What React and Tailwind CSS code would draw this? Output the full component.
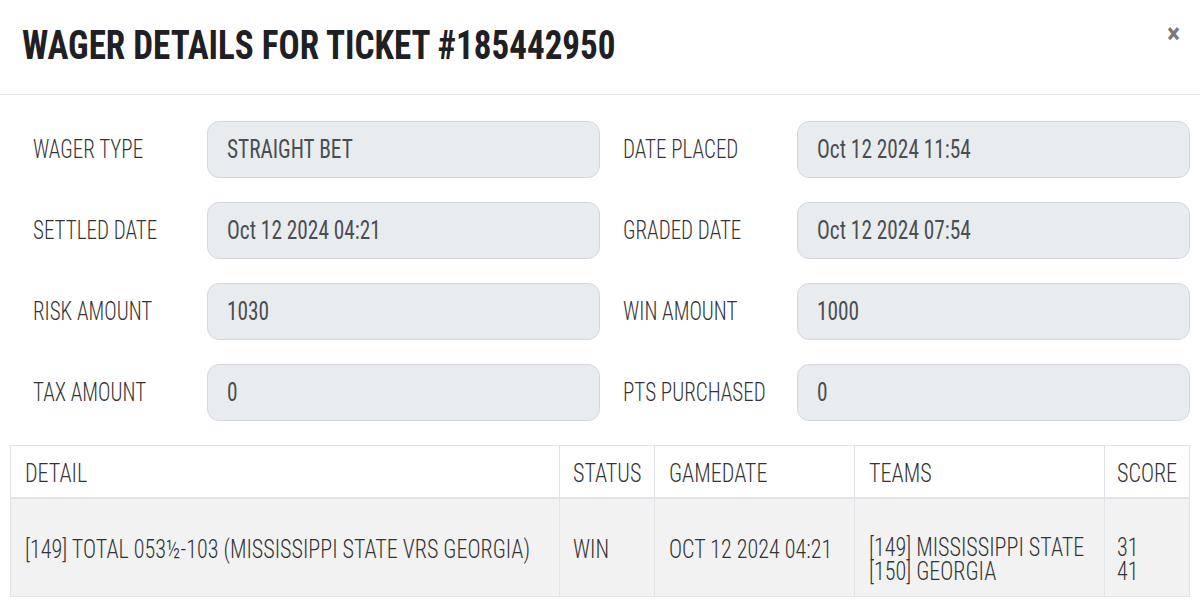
import React from "react";

const FONT = { fontFamily: "'Roboto Condensed','Liberation Sans Narrow','DejaVu Sans Condensed',sans-serif" };

function N({ children, className = "" }) {
  return <span className={"inline-block origin-left whitespace-nowrap " + className}>{children}</span>;
}

function Field({ label, value }) {
  return (
    <div className="flex items-center">
      <div className="w-[174px] shrink-0 text-[26px] font-light text-[#333]">
        <N className="scale-x-[0.81]">{label}</N>
      </div>
      <div className="flex-1 h-[57px] rounded-[12px] bg-[#e9ecef] border border-[#d3d7dc] flex items-center px-[19px] text-[26px] text-[#4a4d52]">
        <N className="scale-x-[0.82]">{value}</N>
      </div>
    </div>
  );
}

function Th({ children, pl }) {
  return (
    <th className={"border border-[#dfe2e6] border-b-2 text-left font-light align-middle " + pl}>
      <N className="scale-x-[0.85] pt-[4px]">{children}</N>
    </th>
  );
}

export default function App() {
  return (
    <div className="w-[1200px] h-[616px] bg-white overflow-hidden" style={FONT}>
      <div className="h-[95px] border-b border-[#e3e3e8] flex items-center justify-between pl-[22px] pr-[20px]">
        <h1 className="text-[41px] font-bold text-[#1e2024] leading-none pb-[4px]">
          <N className="scale-x-[0.855]">WAGER DETAILS FOR TICKET #185442950</N>
        </h1>
        <div className="text-[28px] font-bold text-[#7a7a7a] leading-none -mt-[26px]">×</div>
      </div>

      <div className="pt-[26px] pl-[33px] pr-[10px] grid grid-cols-2 gap-x-[23px] gap-y-[24px]">
        <Field label="WAGER TYPE" value="STRAIGHT BET" />
        <Field label="DATE PLACED" value="Oct 12 2024 11:54" />
        <Field label="SETTLED DATE" value="Oct 12 2024 04:21" />
        <Field label="GRADED DATE" value="Oct 12 2024 07:54" />
        <Field label="RISK AMOUNT" value="1030" />
        <Field label="WIN AMOUNT" value="1000" />
        <Field label="TAX AMOUNT" value="0" />
        <Field label="PTS PURCHASED" value="0" />
      </div>

      <div className="mt-[24px] mx-[10px]">
        <table className="w-full border-collapse text-[26px] font-light text-[#333] table-fixed">
          <colgroup>
            <col className="w-[549px]" />
            <col className="w-[95px]" />
            <col className="w-[200px]" />
            <col className="w-[250px]" />
            <col />
          </colgroup>
          <thead>
            <tr className="h-[52px] bg-white">
              <Th pl="pl-[14px]">DETAIL</Th>
              <Th pl="pl-[13px]">STATUS</Th>
              <Th pl="pl-[14px]">GAMEDATE</Th>
              <Th pl="pl-[14px]">TEAMS</Th>
              <Th pl="pl-[12px]">SCORE</Th>
            </tr>
          </thead>
          <tbody>
            <tr className="h-[99px] bg-[#f2f2f2]">
              <td className="border border-[#dfe2e6] pl-[14px] pt-[4px]">
                <N className="scale-x-[0.85]">[149] TOTAL 053½-103 (MISSISSIPPI STATE VRS GEORGIA)</N>
              </td>
              <td className="border border-[#dfe2e6] pl-[13px] pt-[4px]">
                <N className="scale-x-[0.85]">WIN</N>
              </td>
              <td className="border border-[#dfe2e6] pl-[14px] pt-[4px]">
                <N className="scale-x-[0.85]">OCT 12 2024 04:21</N>
              </td>
              <td className="border border-[#dfe2e6] pl-[14px] leading-[24px] pt-[24px]">
                <N className="scale-x-[0.85]">[149] MISSISSIPPI STATE</N>
                <br />
                <N className="scale-x-[0.85]">[150] GEORGIA</N>
              </td>
              <td className="border border-[#dfe2e6] pl-[12px] leading-[24px] pt-[24px]">
                <N className="scale-x-[0.85]">31</N>
                <br />
                <N className="scale-x-[0.85]">41</N>
              </td>
            </tr>
          </tbody>
        </table>
      </div>
    </div>
  );
}
